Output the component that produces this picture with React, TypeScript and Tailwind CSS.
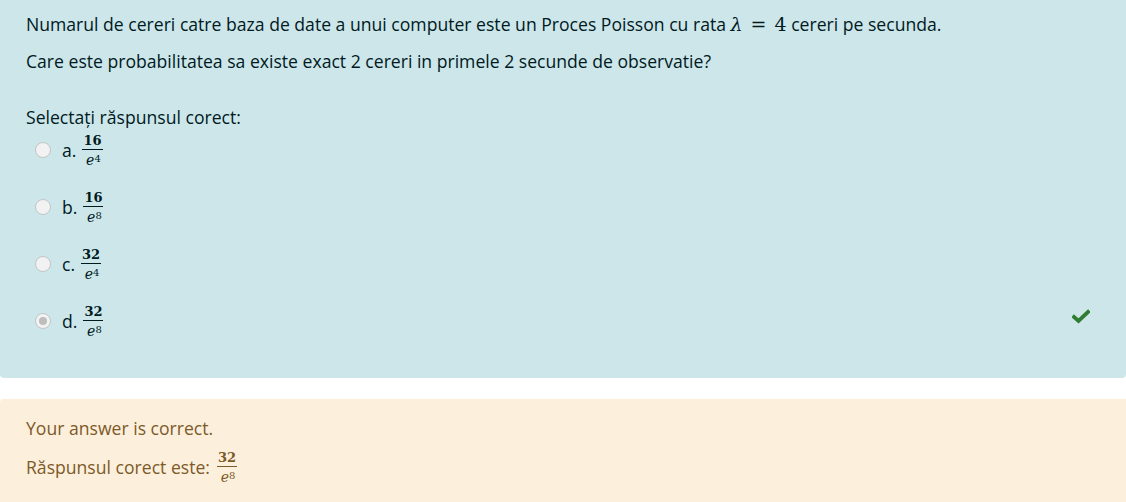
import React from 'react';

const serif = { fontFamily: '"DejaVu Serif", "Liberation Serif", serif' };

function Frac({ num, exp }: { num: string; exp: string }) {
  return (
    <span className="inline-flex flex-col items-center align-middle leading-none mx-[3px]" style={serif}>
      <span className="font-bold text-[13px] px-[1px] pb-[2px] border-b border-current">{num}</span>
      <span className="italic text-[14px] pt-[3px] pl-[2px]">
        e<sup className="text-[10px] not-italic relative -top-[3px]">{exp}</sup>
      </span>
    </span>
  );
}

const options = [
  { letter: 'a.', num: '16', exp: '4' },
  { letter: 'b.', num: '16', exp: '8' },
  { letter: 'c.', num: '32', exp: '4' },
  { letter: 'd.', num: '32', exp: '8', checked: true },
];

export default function App() {
  return (
    <div
      className="w-[1126px] h-[502px] bg-white overflow-hidden text-[17.6px] text-[#001a1e]"
      style={{ fontFamily: '"Open Sans", "Noto Sans", sans-serif' }}
    >
      <div className="bg-[#cde6ea] rounded-b-[4px] h-[378px] pl-[26px] pr-[34px] pt-[9px]">
        <p className="leading-[30px] whitespace-nowrap">
          Numarul de cereri catre baza de date a unui computer este un Proces Poisson cu rata{' '}
          <span style={serif} className="italic text-[19px]">λ</span>
          <span style={serif} className="text-[19px] mx-[8px]">=</span>
          <span style={serif} className="text-[19px]">4</span> cereri pe secunda.
        </p>
        <p className="leading-[30px] mt-[7px]">
          Care este probabilitatea sa existe exact 2 cereri in primele 2 secunde de observatie?
        </p>
        <p className="leading-[30px] mt-[26px]">Selectați răspunsul corect:</p>
        <div className="flex flex-col gap-[19px] -mt-[1px] ml-[9px]">
          {options.map((o) => (
            <div key={o.letter} className="flex items-center h-[38px]">
              <span className="w-[16px] h-[16px] rounded-full border border-[#c4c4c4] bg-[#f2f2f2] flex items-center justify-center">
                {o.checked && <span className="w-[8px] h-[8px] rounded-full bg-[#bdbdbd]" />}
              </span>
              <span className="ml-[11px] mr-[3px]">{o.letter}</span>
              <Frac num={o.num} exp={o.exp} />
              {o.checked && (
                <svg className="ml-auto mr-[2px] -mt-[10px]" width="18" height="15" viewBox="0 0 18 15">
                  <path d="M2 8 L6.5 12 L16 3" fill="none" stroke="#2e7d32" strokeWidth="3.8" strokeLinecap="square" />
                </svg>
              )}
            </div>
          ))}
        </div>
      </div>
      <div className="mt-[21px] bg-[#fcefdc] rounded-tl-[4px] h-[110px] pl-[26px] pt-[14px] text-[#7d5a29]">
        <p className="leading-[30px]">Your answer is correct.</p>
        <p className="leading-[30px] mt-[7px] flex items-center">
          Răspunsul corect este:
          <span className="ml-[4px]"><Frac num="32" exp="8" /></span>
        </p>
      </div>
    </div>
  );
}
